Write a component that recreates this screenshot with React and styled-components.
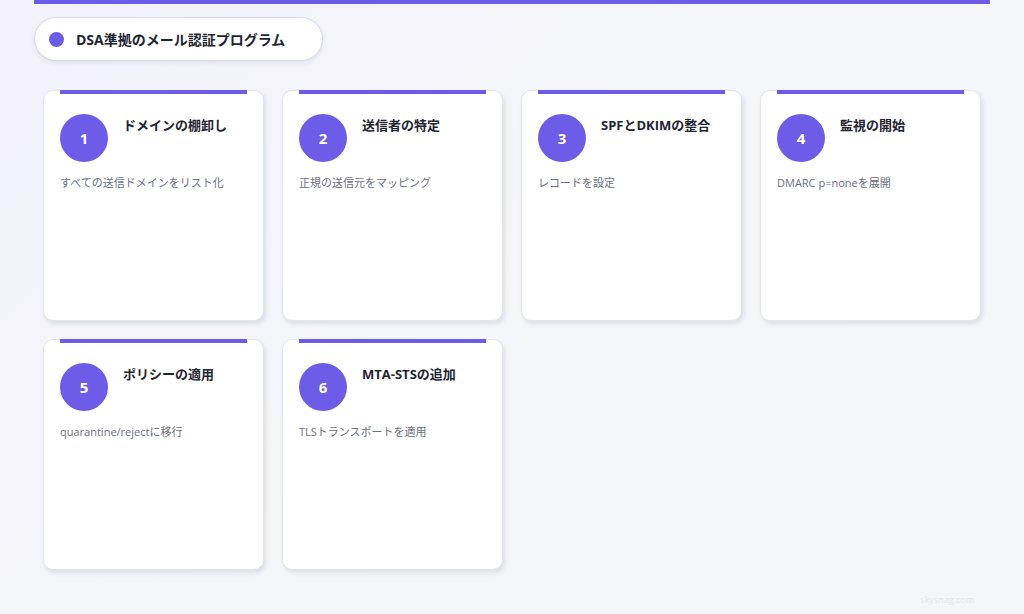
import styled, { createGlobalStyle } from 'styled-components';

const steps = [
  { n: 1, title: 'ドメインの棚卸し', desc: 'すべての送信ドメインをリスト化' },
  { n: 2, title: '送信者の特定', desc: '正規の送信元をマッピング' },
  { n: 3, title: 'SPFとDKIMの整合', desc: 'レコードを設定' },
  { n: 4, title: '監視の開始', desc: 'DMARC p=noneを展開' },
  { n: 5, title: 'ポリシーの適用', desc: 'quarantine/rejectに移行' },
  { n: 6, title: 'MTA-STSの追加', desc: 'TLSトランスポートを適用' },
];

const Global = createGlobalStyle`
  body {
    margin: 0;
    font-family: "Open Sans", "Noto Sans CJK JP", sans-serif;
  }
`;

const S = {
  Page: styled.div`
    position: relative;
    width: 1024px;
    height: 614px;
    overflow: hidden;
    background: linear-gradient(135deg, #f3f2fb 0%, #f5f6f9 50%, #f4f6f9 100%);
  `,
  TopBar: styled.div`
    height: 4px;
    margin: 0 34px;
    background: #6c5ce7;
  `,
  Header: styled.div`
    display: inline-flex;
    align-items: center;
    gap: 12px;
    height: 42px;
    margin: 13px 0 0 34px;
    padding: 0 37px 0 14px;
    background: #fff;
    border: 1px solid #d8dbe6;
    border-radius: 22px;
    box-shadow: 0 2px 4px rgba(80, 90, 120, 0.12);
    font-size: 14px;
    font-weight: 700;
    color: #1f2433;
  `,
  Dot: styled.span`
    width: 15px;
    height: 15px;
    border-radius: 50%;
    background: #6c5ce7;
  `,
  Grid: styled.div`
    display: grid;
    grid-template-columns: repeat(4, 221px);
    grid-auto-rows: 231px;
    gap: 18px;
    margin: 29px 0 0 43px;
  `,
  Card: styled.div`
    position: relative;
    background: #fff;
    border: 1px solid #e3e5ec;
    border-radius: 10px;
    box-shadow: 2px 3px 4px rgba(90, 100, 130, 0.15);
    padding: 23px 16px 0;
  `,
  Accent: styled.div`
    position: absolute;
    top: -1px;
    left: 16px;
    right: 16px;
    height: 4px;
    background: #6c5ce7;
  `,
  Row: styled.div`
    display: flex;
    align-items: flex-start;
    gap: 15px;
  `,
  Num: styled.div`
    width: 48px;
    height: 48px;
    flex: none;
    border-radius: 50%;
    background: #6c5ce7;
    color: #fff;
    font-size: 15px;
    font-weight: 700;
    display: flex;
    align-items: center;
    justify-content: center;
  `,
  Title: styled.div`
    font-size: 13px;
    font-weight: 700;
    color: #1f2433;
    margin-top: 1px;
  `,
  Desc: styled.div`
    margin-top: 12px;
    font-size: 11px;
    color: #6b7080;
  `,
  Mark: styled.div`
    position: absolute;
    right: 50px;
    bottom: 8px;
    font-size: 9px;
    color: #e2e5ea;
  `,
};

export default function App() {
  return (
    <S.Page>
      <Global />
      <S.TopBar />
      <S.Header>
        <S.Dot />
        DSA準拠のメール認証プログラム
      </S.Header>
      <S.Grid>
        {steps.map((s) => (
          <S.Card key={s.n}>
            <S.Accent />
            <S.Row>
              <S.Num>{s.n}</S.Num>
              <S.Title>{s.title}</S.Title>
            </S.Row>
            <S.Desc>{s.desc}</S.Desc>
          </S.Card>
        ))}
      </S.Grid>
      <S.Mark>skysnag.com</S.Mark>
    </S.Page>
  );
}
